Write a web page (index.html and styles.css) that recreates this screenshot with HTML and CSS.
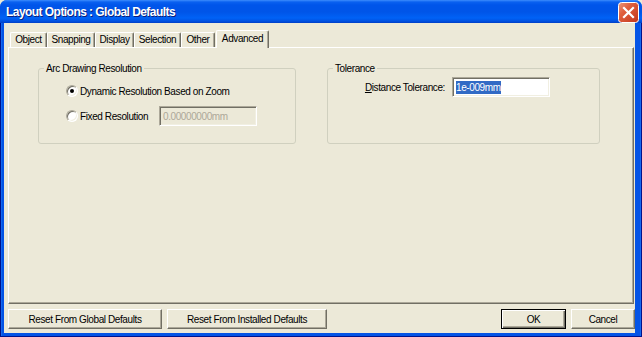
FILE: index.html
```html
<!DOCTYPE html>
<html>
<head>
<meta charset="utf-8">
<link rel="stylesheet" href="styles.css">
</head>
<body>
<div class="window">
  <div class="titlebar">
    <span class="title">Layout Options : Global Defaults</span>
    <span class="close">
      <svg width="21" height="21" viewBox="0 0 21 21">
        <defs>
          <linearGradient id="cg" x1="0" y1="0" x2="1" y2="1">
            <stop offset="0" stop-color="#E99A7E"/>
            <stop offset="0.35" stop-color="#E0603E"/>
            <stop offset="1" stop-color="#C2351A"/>
          </linearGradient>
        </defs>
        <rect x="0.5" y="0.5" width="20" height="20" rx="3" fill="url(#cg)" stroke="#FFFFFF"/>
        <path d="M6 6 L15 15 M15 6 L6 15" stroke="#FFFFFF" stroke-width="2.2" stroke-linecap="square"/>
      </svg>
    </span>
  </div>
  <div class="frame">
    <div class="client">
      <div class="tabs">
        <div class="tab w-object">Object</div>
        <div class="tab w-snapping">Snapping</div>
        <div class="tab w-display">Display</div>
        <div class="tab w-selection">Selection</div>
        <div class="tab w-other">Other</div>
        <div class="tab active w-advanced">Advanced</div>
      </div>
      <div class="panel">
        <fieldset class="group arc">
          <legend>Arc Drawing Resolution</legend>
          <div class="row rrow">
            <span class="radio checked"></span>
            <span class="rlabel">Dynamic Resolution Based on Zoom</span>
          </div>
          <div class="row rrow row2">
            <span class="radio"></span>
            <span class="rlabel fixed">Fixed Resolution</span>
            <span class="textbox disabled">0.00000000mm</span>
          </div>
        </fieldset>
        <fieldset class="group tol">
          <legend>Tolerance</legend>
          <div class="row trow">
            <span class="tlabel"><u>D</u>istance Tolerance:</span>
            <span class="textbox"><span class="sel">1e-009mm</span></span>
          </div>
        </fieldset>
      </div>
      <div class="buttons">
        <div class="btn w-global">Reset From Global Defaults</div>
        <div class="btn w-installed">Reset From Installed Defaults</div>
        <div class="spacer"></div>
        <div class="btn default w-ok">OK</div>
        <div class="btn w-cancel">Cancel</div>
      </div>
    </div>
  </div>
</div>
</body>
</html>
```
FILE: styles.css
```css
html, body {
  margin: 0;
  padding: 0;
}
body {
  width: 642px;
  height: 337px;
  overflow: hidden;
  font-family: "Liberation Sans", Arial, sans-serif;
  font-size: 10px;
  letter-spacing: -0.4px;
  line-height: 13px;
  color: #000;
  background: #ECE9D8;
}
.window {
  width: 642px;
  height: 337px;
  display: flex;
  flex-direction: column;
  background: #0054E3;
  border-radius: 7px 7px 0 0;
  overflow: hidden;
}
.titlebar {
  height: 23px;
  flex: none;
  display: flex;
  align-items: center;
  padding: 0 3px 0 6px;
  background: linear-gradient(to bottom, #3D8DFD 0px, #0A61F0 2px, #0055EA 5px, #0055E8 12px, #0062F6 18px, #0052E2 21px, #003FC6 23px);
}
.title {
  flex: 1;
  color: #FFFFFF;
  font-family: "Liberation Sans", Arial, sans-serif;
  font-weight: bold;
  font-size: 12px;
  letter-spacing: -0.55px;
  padding-top: 1px;
  text-shadow: 1px 1px 0 #0A1E7A;
}
.close {
  display: flex;
  width: 21px;
  height: 21px;
  margin-top: 2px;
}
.frame {
  flex: 1;
  display: flex;
  padding: 0 7px 4px 4px;
  background: #0454E6;
  box-shadow: inset 1px 0 #00138C, inset -1px 0 #00138C, inset 0 -1px #00138C, inset 2px 0 #166AEE, inset -2px 0 #166AEE;
}
.client {
  flex: 1;
  display: flex;
  flex-direction: column;
  background: #ECE9D8;
  padding: 7px 0 4px 0;
}
.tabs {
  height: 17px;
  display: flex;
  align-items: flex-end;
  padding-left: 6px;
}
.tab {
  box-sizing: border-box;
  height: 15px;
  border-top: 1px solid #FFFFFF;
  border-left: 1px solid #FFFFFF;
  border-right: 1px solid #716F64;
  box-shadow: inset -1px 0 #ACA899;
  border-radius: 2px 2px 0 0;
  text-align: center;
  line-height: 14px;
  white-space: nowrap;
  background: #ECE9D8;
}
.tab.active {
  height: 18px;
  margin-bottom: -1px;
  position: relative;
  z-index: 1;
  line-height: 15px;
}
.w-object { width: 37px; }
.w-snapping { width: 48px; }
.w-display { width: 39px; }
.w-selection { width: 47px; }
.w-other { width: 34px; }
.w-advanced { width: 53px; margin-left: 1px; }
.panel {
  box-sizing: border-box;
  height: 257px;
  margin: 0 1px 0 4px;
  border-top: 1px solid #FFFFFF;
  border-left: 1px solid #FFFFFF;
  border-right: 1px solid #716F64;
  border-bottom: 1px solid #716F64;
  box-shadow: inset -1px -1px #ACA899;
  display: flex;
  align-items: flex-start;
  padding: 14px 0 0 29px;
  gap: 31px;
}
.group {
  box-sizing: border-box;
  margin: 0;
  padding: 0;
  height: 82px;
  border: 1px solid #D0D0BF;
  border-radius: 3px;
  min-width: 0;
}
.group legend {
  margin-left: 5px;
  padding: 0 2px;
  line-height: 13px;
}
.arc {
  width: 258px;
  padding-top: 6px;
}
.tol {
  width: 273px;
  padding-top: 2px;
}
.row {
  height: 20px;
  display: flex;
  align-items: center;
  white-space: nowrap;
}
.rrow {
  padding-left: 27px;
}
.row2 {
  margin-top: 5px;
}
.radio {
  box-sizing: border-box;
  flex: none;
  width: 12px;
  height: 12px;
  border-radius: 50%;
  border: 1px solid;
  border-color: #ACA899 #FFFFFF #FFFFFF #ACA899;
  box-shadow: inset 1px 1px #716F64, inset -1px -1px #F1EFE2;
  background: #FFFFFF;
  display: flex;
  align-items: center;
  justify-content: center;
  margin-right: 2px;
}
.radio.checked::after {
  content: "";
  width: 4px;
  height: 4px;
  border-radius: 50%;
  background: #000000;
}
.fixed {
  width: 79px;
  flex: none;
}
.textbox {
  box-sizing: border-box;
  flex: none;
  width: 98px;
  height: 20px;
  border: 1px solid;
  border-color: #ACA899 #FFFFFF #FFFFFF #ACA899;
  box-shadow: inset 1px 1px #716F64, inset -1px -1px #F1EFE2;
  background: #FFFFFF;
  display: flex;
  align-items: center;
  padding-left: 3px;
}
.textbox.disabled {
  background: #ECE9D8;
  color: #ACA899;
}
.trow {
  padding-left: 17px;
}
.tlabel {
  flex: none;
  width: 100px;
  text-align: right;
  margin-right: 7px;
}
.sel {
  background: #316AC5;
  color: #FFFFFF;
}
.buttons {
  display: flex;
  margin-top: 5px;
  height: 20px;
  padding-left: 4px;
}
.spacer {
  flex: 1;
}
.btn {
  box-sizing: border-box;
  height: 20px;
  border: 1px solid;
  border-color: #FFFFFF #716F64 #716F64 #FFFFFF;
  box-shadow: inset -1px -1px #ACA899;
  display: flex;
  align-items: center;
  justify-content: center;
}
.btn.default {
  border: 1px solid #000000;
  box-shadow: inset 1px 1px #FFFFFF, inset -1px -1px #716F64, inset -2px -2px #ACA899;
}
.w-global { width: 154px; }
.w-installed { width: 160px; margin-left: 5px; }
.w-ok { width: 65px; }
.w-cancel { width: 64px; margin-left: 5px; }
```
